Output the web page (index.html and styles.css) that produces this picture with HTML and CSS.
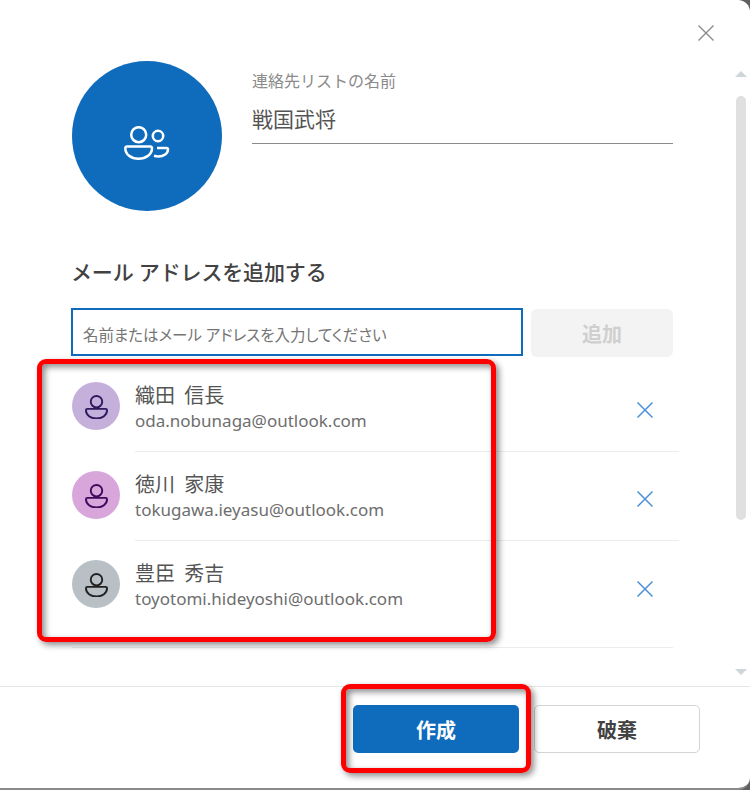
FILE: index.html
```html
<!DOCTYPE html>
<html lang="ja">
<head>
<meta charset="utf-8">
<title>連絡先リスト</title>
<link rel="stylesheet" href="styles.css">
</head>
<body>
<div class="dialog">
  <div class="top-bar">
    <svg class="close-icon" viewBox="0 0 16 16"><path d="M0.5 0.5 15.5 15.500M15.500 0.500 0.500 15.500"/></svg>
  </div>
  <div class="middle">
    <div class="content">
      <div class="list-head">
        <div class="list-avatar">
          <svg class="people-icon" viewBox="0 0 46 36">
            <circle cx="14.700" cy="8.700" r="7.500"/>
            <path d="M3 20.500h23.500a1.500 1.500 0 0 1 1.500 1.500c0 6.500-6 10.800-13.500 10.800S1.300 28.500 1.300 22A1.500 1.500 0 0 1 3 20.500Z"/>
            <circle cx="34" cy="10" r="5.200"/>
            <path d="M33 22h9.500a1.500 1.500 0 0 1 1.500 1.500c0 4-4.500 7-9.500 7-1.500 0-3-.2-4.500-.7"/>
          </svg>
        </div>
        <div class="name-field">
          <div class="field-label">連絡先リストの名前</div>
          <div class="field-value">戦国武将</div>
        </div>
      </div>
      <h2 class="section-title">メール アドレスを追加する</h2>
      <div class="add-row">
        <div class="search-input">名前またはメール アドレスを入力してください</div>
        <div class="add-btn">追加</div>
      </div>
      <ul class="members">
        <li class="member">
          <div class="avatar avatar-a">
            <svg class="person-icon" viewBox="0 0 24 26"><circle cx="12" cy="8" r="6"/><path d="M2.500 15.500h19a1.500 1.500 0 0 1 1.500 1.500c0 5-5 8.500-11 8.500S1 22 1 17a1.500 1.500 0 0 1 1.500-1.500Z"/></svg>
          </div>
          <div class="member-main">
            <div class="member-text">
              <div class="member-name">織田 信長</div>
              <div class="member-mail">oda.nobunaga@outlook.com</div>
            </div>
            <svg class="remove-icon" viewBox="0 0 16 16"><path d="M0.500 0.500 15.500 15.500M15.500 0.500 0.500 15.500"/></svg>
          </div>
        </li>
        <li class="member">
          <div class="avatar avatar-b">
            <svg class="person-icon" viewBox="0 0 24 26"><circle cx="12" cy="8" r="6"/><path d="M2.500 15.500h19a1.500 1.500 0 0 1 1.500 1.500c0 5-5 8.500-11 8.500S1 22 1 17a1.500 1.500 0 0 1 1.500-1.500Z"/></svg>
          </div>
          <div class="member-main">
            <div class="member-text">
              <div class="member-name">徳川 家康</div>
              <div class="member-mail">tokugawa.ieyasu@outlook.com</div>
            </div>
            <svg class="remove-icon" viewBox="0 0 16 16"><path d="M0.500 0.500 15.500 15.500M15.500 0.500 0.500 15.500"/></svg>
          </div>
        </li>
        <li class="member">
          <div class="avatar avatar-c">
            <svg class="person-icon" viewBox="0 0 24 26"><circle cx="12" cy="8" r="6"/><path d="M2.500 15.500h19a1.500 1.500 0 0 1 1.500 1.500c0 5-5 8.500-11 8.500S1 22 1 17a1.500 1.500 0 0 1 1.500-1.500Z"/></svg>
          </div>
          <div class="member-main member-last">
            <div class="member-text">
              <div class="member-name">豊臣 秀吉</div>
              <div class="member-mail">toyotomi.hideyoshi@outlook.com</div>
            </div>
            <svg class="remove-icon" viewBox="0 0 16 16"><path d="M0.500 0.500 15.500 15.500M15.500 0.500 0.500 15.500"/></svg>
          </div>
        </li>
      </ul>
      <div class="list-end"></div>
    </div>
    <div class="scrollbar">
      <div class="arrow-up"></div>
      <div class="thumb"></div>
      <div class="arrow-down"></div>
    </div>
  </div>
  <div class="footer">
    <div class="btn btn-primary">作成</div>
    <div class="btn btn-secondary">破棄</div>
  </div>
  <div class="mark mark-list"></div>
  <div class="mark mark-create"></div>
</div>
</body>
</html>
```
FILE: styles.css
```css
* { box-sizing: border-box; }
html, body { margin: 0; height: 100%; }
body {
  width: 750px;
  height: 790px;
  overflow: hidden;
  background: #5f5f5f;
  font-family: "Noto Sans", "Noto Sans CJK JP", sans-serif;
  color: #424242;
}
.dialog {
  position: relative;
  width: 750px;
  height: 790px;
  background: #fff;
  border-radius: 0 12px 12px 0;
  border-bottom: 2px solid #8a8a8a;
  display: flex;
  flex-direction: column;
}
.top-bar {
  height: 61px;
  display: flex;
  justify-content: flex-end;
  align-items: flex-start;
  padding: 25px 36px 0 0;
  flex: none;
}
.close-icon { width: 16px; height: 16px; fill: none; stroke: #8a8a8a; stroke-width: 1.4; }
.middle { flex: 1; display: flex; min-height: 0; }
.content { width: 732px; padding-left: 72px; }
.list-head { display: flex; gap: 30px; width: 601px; }
.list-avatar {
  width: 150px; height: 150px; border-radius: 50%;
  background: #0f6cbd;
  display: flex; align-items: center; justify-content: center;
  flex: none;
}
.people-icon { width: 46px; height: 36px; fill: none; stroke: #fff; stroke-width: 2.5; margin-top: 16px; }
.name-field {
  flex: 1; height: 83px;
  border-bottom: 1.5px solid #8a8a8a;
  padding-top: 8px;
}
.field-label { font-size: 16px; line-height: 24px; color: #8a8a8a; }
.field-value { font-size: 21px; line-height: 28px; margin-top: 12px; color: #555; }
.section-title {
  margin: 46px 0 0 -1px;
  font-size: 21px;
  line-height: 30px;
  font-weight: 500;
  letter-spacing: -.15px;
  color: #424242;
}
.add-row { display: flex; width: 602px; margin: 21px 0 0 -1px; gap: 8px; }
.search-input {
  width: 452px; height: 48px;
  border: 2px solid #0f6cbd;
  padding: 5px 0 0 10px;
  font-size: 15.500px;
  font-feature-settings: "palt";
  display: flex; align-items: center;
  color: #757575;
}
.add-btn {
  flex: 1; height: 48px; margin-top: 1px;
  background: #f3f3f3; border-radius: 6px;
  font-size: 20px; font-weight: 700; color: #cfcfcf;
  display: flex; align-items: center; justify-content: center;
}
.members { list-style: none; margin: 0; padding: 6px 0 0; width: 607px; }
.member { display: flex; height: 89px; align-items: stretch; }
.avatar {
  width: 48px; height: 48px; border-radius: 50%;
  flex: none; margin: 19px 15px 0 0;
  display: flex; align-items: center; justify-content: center;
}
.avatar-a { background: #c5b0dc; color: #2e1a5e; }
.avatar-b { background: #d8a6db; color: #3f0a5c; }
.avatar-c { background: #b8c0c6; color: #222; }
.person-icon { width: 23px; height: 25px; fill: none; stroke: currentColor; stroke-width: 2; }
.member-main {
  flex: 1; display: flex; justify-content: space-between; align-items: center;
  border-bottom: 1px solid #ececec;
  padding-right: 26px;
}
.member-last { border-bottom: 0; }
.member-text { padding-top: 0; }
.member-name { font-size: 20px; line-height: 27px; word-spacing: 4px; color: #555; }
.member-mail { font-size: 17px; line-height: 24px; color: #6e6e6e; }
.remove-icon { width: 16px; height: 16px; fill: none; stroke: #4a90d9; stroke-width: 1.5; margin-top: 6px; }
.list-end { width: 601px; height: 1px; background: #ececec; margin-top: 17px; }
.scrollbar {
  width: 18px; flex: none; margin-top: 10px;
  display: flex; flex-direction: column; align-items: center;
}
.arrow-up { width: 0; height: 0; border: 6px solid transparent; border-top: 0; border-bottom: 6px solid #cfd6da; }
.thumb { width: 10px; height: 424px; margin-top: 19px; border-radius: 5px; background: #e0e0e0; }
.arrow-down { width: 0; height: 0; margin-top: 149px; border: 6px solid transparent; border-bottom: 0; border-top: 6px solid #cfd6da; }
.footer {
  height: 102px; flex: none;
  border-top: 1px solid #e6e6e6;
  display: flex; justify-content: flex-end; gap: 15px;
  padding: 18px 50px 0 0;
}
.btn {
  width: 166px; height: 48px; border-radius: 5px;
  display: flex; align-items: center; justify-content: center;
  font-size: 20px; font-weight: 700;
}
.btn-primary { background: #0f6cbd; color: #fff; }
.btn-secondary { background: #fff; border: 1.5px solid #d4d4d4; color: #424242; }
.mark {
  position: absolute;
  border: 5px solid #f00;
  border-radius: 9px;
  box-shadow: 3px 3px 6px rgba(0,0,0,.45), inset 3px 3px 6px rgba(0,0,0,.45);
}
.mark-list { left: 37px; top: 359px; width: 459px; height: 283px; }
.mark-create { left: 341px; top: 684px; width: 190px; height: 89px; }
```
